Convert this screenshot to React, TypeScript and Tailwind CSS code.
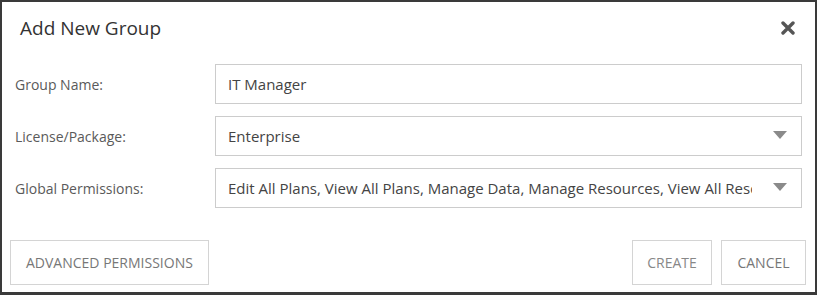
import React from 'react';

const font = { fontFamily: '"Open Sans", "Noto Sans", sans-serif' };

function Caret() {
  return (
    <svg width="14" height="8" viewBox="0 0 14 8" className="ml-[21px] mt-[-3px] shrink-0">
      <path d="M0 0 H14 L7 8 Z" fill="#8a8a8a" />
    </svg>
  );
}

function Field({ label, value, select }: { label: string; value: string; select?: boolean }) {
  return (
    <div className="flex items-center">
      <label className="w-[200px] shrink-0 text-[14px] text-[#5a5a5a]">{label}</label>
      <div className="flex h-[40px] min-w-0 flex-1 items-center border border-[#ccc] bg-white pl-[12px] pr-[14px]">
        <span className="min-w-0 flex-1 overflow-hidden whitespace-nowrap text-[15px] text-[#444]">{value}</span>
        {select && <Caret />}
      </div>
    </div>
  );
}

export default function App() {
  return (
    <div className="h-[295px] w-[817px] border-x-2 border-t-2 border-b-[3px] border-[#3a3a3a] bg-white" style={font}>
      {/* Header */}
      <div className="flex h-[52px] items-center justify-between pl-[18px] pr-[20px]">
        <h2 className="text-[19px] text-[#333]">Add New Group</h2>
        <svg width="14" height="14" viewBox="0 0 14 14">
          <path d="M2 2 L12 12 M12 2 L2 12" stroke="#555" strokeWidth="3.4" strokeLinecap="round" />
        </svg>
      </div>

      {/* Body */}
      <div className="flex flex-col gap-[12px] pl-[13px] pr-[13px] pt-[10px]">
        <Field label="Group Name:" value="IT Manager" />
        <Field label="License/Package:" value="Enterprise" select />
        <Field
          label="Global Permissions:"
          value="Edit All Plans, View All Plans, Manage Data, Manage Resources, View All Resources"
          select
        />
      </div>

      {/* Footer */}
      <div className="mt-[32px] flex items-center justify-between pl-[8px] pr-[9px]">
        <button className="h-[45px] border border-[#d4d4d4] px-[15px] text-[14px] uppercase text-[#777]">
          Advanced Permissions
        </button>
        <div className="flex gap-[9px]">
          <button className="h-[45px] w-[80px] border border-[#d4d4d4] text-[14px] uppercase text-[#888]">Create</button>
          <button className="h-[45px] w-[85px] border border-[#d4d4d4] text-[14px] uppercase text-[#777]">Cancel</button>
        </div>
      </div>
    </div>
  );
}
